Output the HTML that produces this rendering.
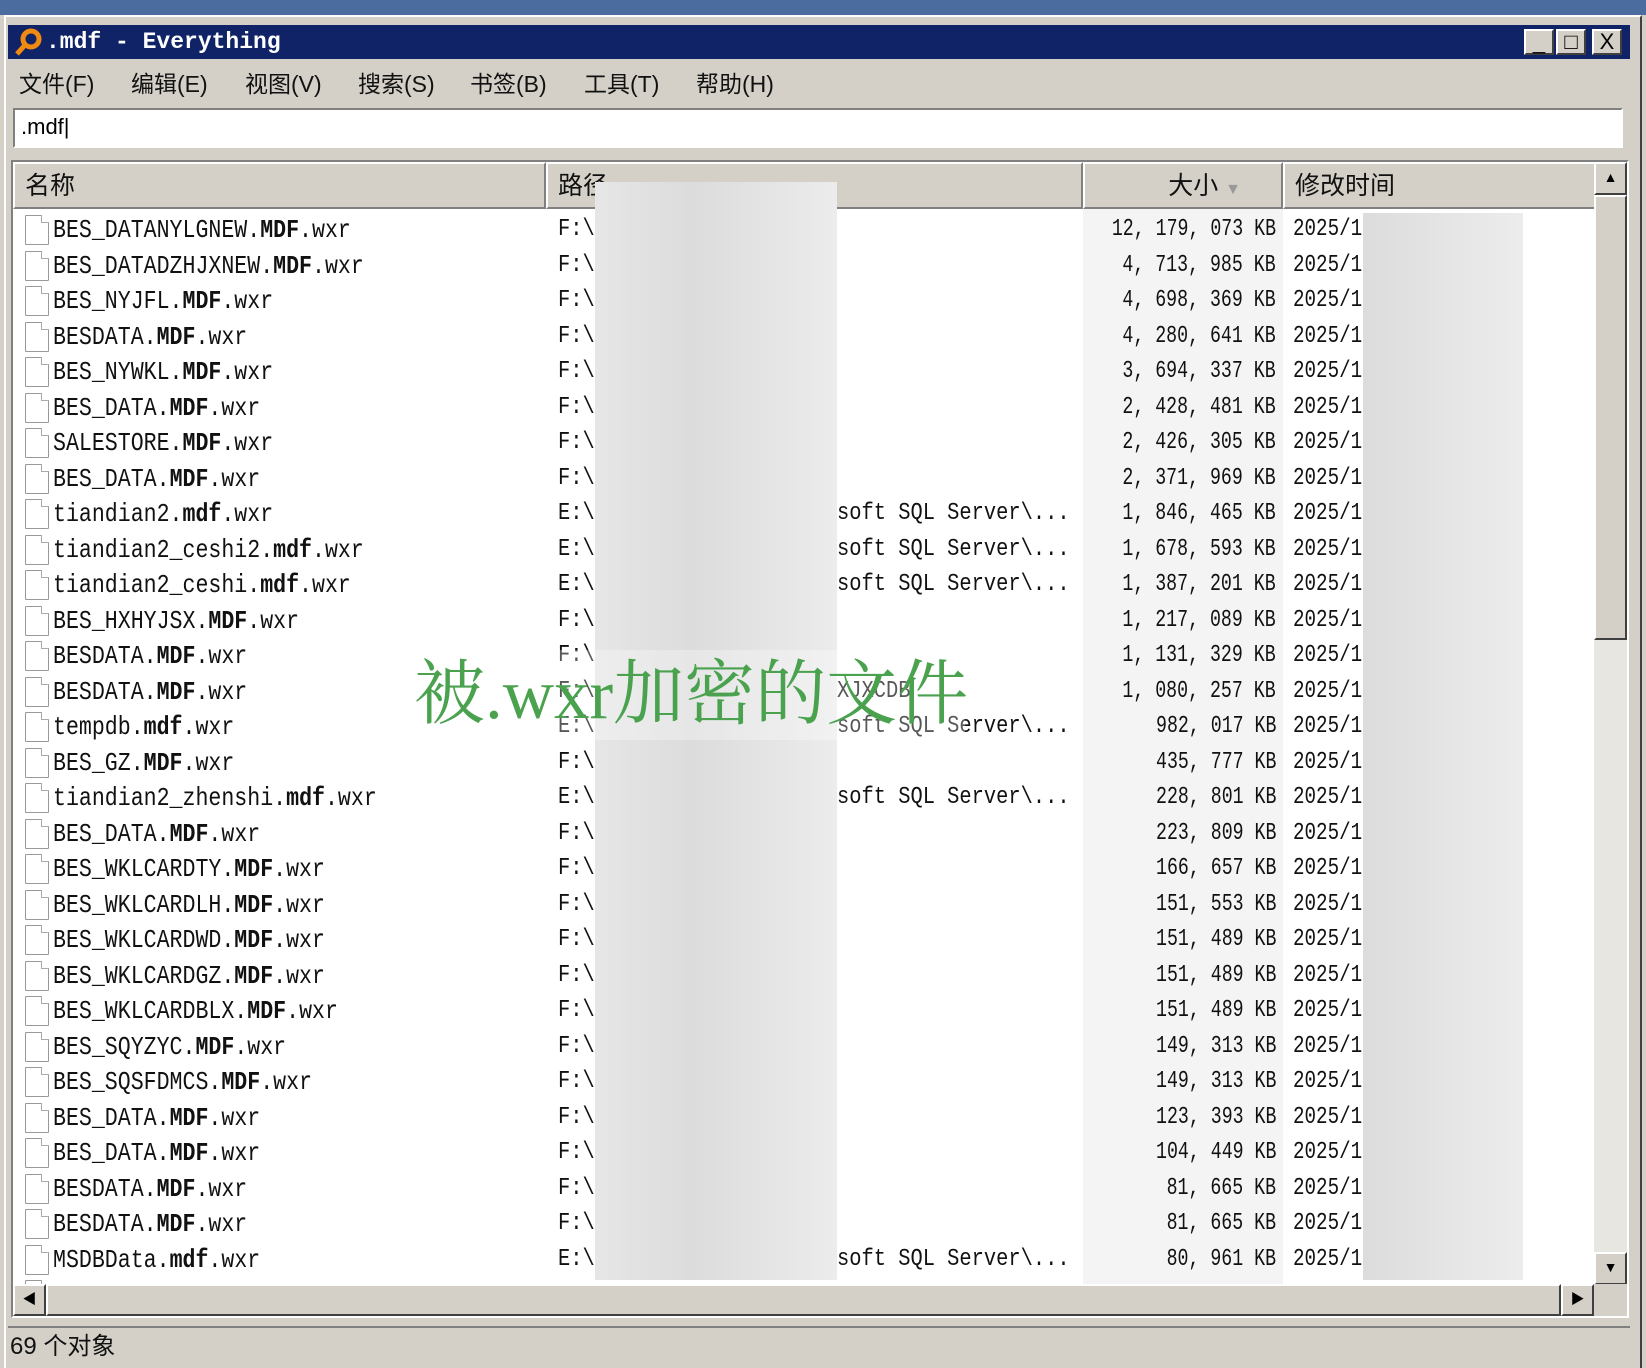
<!DOCTYPE html>
<html><head><meta charset="utf-8"><style>
*{margin:0;padding:0;box-sizing:border-box}
body{width:1646px;height:1368px;background:#d4d0c8;position:relative;overflow:hidden;font-family:"Liberation Sans","Noto Sans CJK SC",sans-serif}
.a{position:absolute}
#top{left:0;top:0;width:1646px;height:15px;background:#4a6c9e}
#win{left:4px;top:15px;width:1638px;height:1353px;background:#d4d0c8;border-left:2px solid #fff;border-top:2px solid #fff;border-right:2px solid #404040}
#title{left:8px;top:25px;width:1622px;height:34px;background:#0f2366;color:#fff;font-family:"Liberation Mono",monospace;font-weight:bold;font-size:23px;line-height:34px;padding-left:38px}
.tb{position:absolute;top:4px;width:30px;height:26px;background:#d4d0c8;border:2px solid;border-color:#fff #404040 #404040 #fff;color:#000;font-size:22px;line-height:22px;text-align:center;font-family:"Liberation Sans",sans-serif;font-weight:normal}
#menu{left:0;top:63px;height:38px;font-size:23px;font-family:"Liberation Sans","Noto Sans CJK SC",sans-serif;color:#111}
#menu span{position:absolute;top:2px;white-space:nowrap}
#search{left:13px;top:108px;width:1610px;height:40px;background:#fff;border:2px solid;border-color:#808080 #fff #fff #808080;font-size:22px;line-height:34px;padding-left:6px}
#list{left:11px;top:160px;width:1618px;height:1158px;border:2px solid;border-color:#808080 #fff #fff #808080;background:#fff;overflow:hidden}
.hd{position:absolute;top:0;height:47px;background:#d4d0c8;border:2px solid;border-color:#fff #808080 #808080 #fff;font-size:25px;line-height:44px;padding-left:10px;color:#111}
.row{position:absolute;left:0;height:35.5px;width:1580px}
.nm{position:absolute;left:40px;top:3px;font-family:"Liberation Mono",monospace;font-size:26px;transform:scaleX(.83);transform-origin:left;white-space:nowrap;color:#111}
.nm b{font-weight:bold}
.ic{position:absolute;left:12px;top:3px;width:24px;height:30px;background:#fff;border:1px solid #999;border-radius:1px}
.ic:after{content:"";position:absolute;right:-1px;top:-1px;width:7px;height:7px;background:#fff;border-left:1px solid #aaa;border-bottom:1px solid #aaa}
.pt{position:absolute;left:545px;top:4px;font-family:"Liberation Mono",monospace;font-size:24px;transform:scaleX(.85);transform-origin:left;color:#111}
.sf{position:absolute;left:824px;top:4px;font-family:"Liberation Mono",monospace;font-size:24px;transform:scaleX(.85);transform-origin:left;white-space:nowrap;color:#111}
.sz{position:absolute;right:317px;top:4px;font-family:"Liberation Mono",monospace;font-size:24px;transform:scaleX(.76);transform-origin:right;white-space:nowrap;color:#111}
.dt{position:absolute;left:1280px;top:4px;font-family:"Liberation Mono",monospace;font-size:24px;transform:scaleX(.8);transform-origin:left;color:#111}
</style></head><body>
<div class="a" id="top"></div>
<div class="a" id="win"></div>
<div class="a" id="title">.mdf - Everything
<svg style="position:absolute;left:6px;top:2px" width="30" height="30" viewBox="0 0 30 30"><circle cx="17" cy="12" r="8" fill="none" stroke="#f08a10" stroke-width="5"/><line x1="11" y1="18" x2="3" y2="27" stroke="#f08a10" stroke-width="5"/></svg>
<div class="tb" style="left:1516px">_</div><div class="tb" style="left:1548px">□</div><div class="tb" style="left:1584px">X</div>
</div>
<div class="a" id="menu"><span style="left:19px">文件(F)</span><span style="left:131px">编辑(E)</span><span style="left:245px">视图(V)</span><span style="left:358px">搜索(S)</span><span style="left:470px">书签(B)</span><span style="left:584px">工具(T)</span><span style="left:696px">帮助(H)</span></div>
<div class="a" id="search">.mdf|</div>
<div class="a" id="list">
<div style="position:absolute;left:1070px;top:47px;width:200px;height:1120px;background:#f4f4f4"></div>
<div class="hd" style="left:0;width:533px">名称</div>
<div class="hd" style="left:533px;width:537px">路径</div>
<div class="hd" style="left:1070px;width:200px;text-align:right;padding-right:40px">大小 <span style="color:#999;font-size:16px">▼</span></div>
<div class="hd" style="left:1270px;width:313px">修改时间</div>
<div id="rows" style="position:absolute;left:0;top:50px">
<div class="row" style="top:0px"><div class="ic"></div><div class="nm">BES_DATANYLGNEW.<b>MDF</b>.wxr</div><div class="pt">F:\</div><div class="sz">12, 179, 073 KB</div><div class="dt">2025/1</div></div>
<div class="row" style="top:35.5px"><div class="ic"></div><div class="nm">BES_DATADZHJXNEW.<b>MDF</b>.wxr</div><div class="pt">F:\</div><div class="sz">4, 713, 985 KB</div><div class="dt">2025/1</div></div>
<div class="row" style="top:71px"><div class="ic"></div><div class="nm">BES_NYJFL.<b>MDF</b>.wxr</div><div class="pt">F:\</div><div class="sz">4, 698, 369 KB</div><div class="dt">2025/1</div></div>
<div class="row" style="top:106.5px"><div class="ic"></div><div class="nm">BESDATA.<b>MDF</b>.wxr</div><div class="pt">F:\</div><div class="sz">4, 280, 641 KB</div><div class="dt">2025/1</div></div>
<div class="row" style="top:142px"><div class="ic"></div><div class="nm">BES_NYWKL.<b>MDF</b>.wxr</div><div class="pt">F:\</div><div class="sz">3, 694, 337 KB</div><div class="dt">2025/1</div></div>
<div class="row" style="top:177.5px"><div class="ic"></div><div class="nm">BES_DATA.<b>MDF</b>.wxr</div><div class="pt">F:\</div><div class="sz">2, 428, 481 KB</div><div class="dt">2025/1</div></div>
<div class="row" style="top:213px"><div class="ic"></div><div class="nm">SALESTORE.<b>MDF</b>.wxr</div><div class="pt">F:\</div><div class="sz">2, 426, 305 KB</div><div class="dt">2025/1</div></div>
<div class="row" style="top:248.5px"><div class="ic"></div><div class="nm">BES_DATA.<b>MDF</b>.wxr</div><div class="pt">F:\</div><div class="sz">2, 371, 969 KB</div><div class="dt">2025/1</div></div>
<div class="row" style="top:284px"><div class="ic"></div><div class="nm">tiandian2.<b>mdf</b>.wxr</div><div class="pt">E:\</div><div class="sf">soft SQL Server\...</div><div class="sz">1, 846, 465 KB</div><div class="dt">2025/1</div></div>
<div class="row" style="top:319.5px"><div class="ic"></div><div class="nm">tiandian2_ceshi2.<b>mdf</b>.wxr</div><div class="pt">E:\</div><div class="sf">soft SQL Server\...</div><div class="sz">1, 678, 593 KB</div><div class="dt">2025/1</div></div>
<div class="row" style="top:355px"><div class="ic"></div><div class="nm">tiandian2_ceshi.<b>mdf</b>.wxr</div><div class="pt">E:\</div><div class="sf">soft SQL Server\...</div><div class="sz">1, 387, 201 KB</div><div class="dt">2025/1</div></div>
<div class="row" style="top:390.5px"><div class="ic"></div><div class="nm">BES_HXHYJSX.<b>MDF</b>.wxr</div><div class="pt">F:\</div><div class="sz">1, 217, 089 KB</div><div class="dt">2025/1</div></div>
<div class="row" style="top:426px"><div class="ic"></div><div class="nm">BESDATA.<b>MDF</b>.wxr</div><div class="pt">F:\</div><div class="sz">1, 131, 329 KB</div><div class="dt">2025/1</div></div>
<div class="row" style="top:461.5px"><div class="ic"></div><div class="nm">BESDATA.<b>MDF</b>.wxr</div><div class="pt">F:\</div><div class="sf">XJXCDB</div><div class="sz">1, 080, 257 KB</div><div class="dt">2025/1</div></div>
<div class="row" style="top:497px"><div class="ic"></div><div class="nm">tempdb.<b>mdf</b>.wxr</div><div class="pt">E:\</div><div class="sf">soft SQL Server\...</div><div class="sz">982, 017 KB</div><div class="dt">2025/1</div></div>
<div class="row" style="top:532.5px"><div class="ic"></div><div class="nm">BES_GZ.<b>MDF</b>.wxr</div><div class="pt">F:\</div><div class="sz">435, 777 KB</div><div class="dt">2025/1</div></div>
<div class="row" style="top:568px"><div class="ic"></div><div class="nm">tiandian2_zhenshi.<b>mdf</b>.wxr</div><div class="pt">E:\</div><div class="sf">soft SQL Server\...</div><div class="sz">228, 801 KB</div><div class="dt">2025/1</div></div>
<div class="row" style="top:603.5px"><div class="ic"></div><div class="nm">BES_DATA.<b>MDF</b>.wxr</div><div class="pt">F:\</div><div class="sz">223, 809 KB</div><div class="dt">2025/1</div></div>
<div class="row" style="top:639px"><div class="ic"></div><div class="nm">BES_WKLCARDTY.<b>MDF</b>.wxr</div><div class="pt">F:\</div><div class="sz">166, 657 KB</div><div class="dt">2025/1</div></div>
<div class="row" style="top:674.5px"><div class="ic"></div><div class="nm">BES_WKLCARDLH.<b>MDF</b>.wxr</div><div class="pt">F:\</div><div class="sz">151, 553 KB</div><div class="dt">2025/1</div></div>
<div class="row" style="top:710px"><div class="ic"></div><div class="nm">BES_WKLCARDWD.<b>MDF</b>.wxr</div><div class="pt">F:\</div><div class="sz">151, 489 KB</div><div class="dt">2025/1</div></div>
<div class="row" style="top:745.5px"><div class="ic"></div><div class="nm">BES_WKLCARDGZ.<b>MDF</b>.wxr</div><div class="pt">F:\</div><div class="sz">151, 489 KB</div><div class="dt">2025/1</div></div>
<div class="row" style="top:781px"><div class="ic"></div><div class="nm">BES_WKLCARDBLX.<b>MDF</b>.wxr</div><div class="pt">F:\</div><div class="sz">151, 489 KB</div><div class="dt">2025/1</div></div>
<div class="row" style="top:816.5px"><div class="ic"></div><div class="nm">BES_SQYZYC.<b>MDF</b>.wxr</div><div class="pt">F:\</div><div class="sz">149, 313 KB</div><div class="dt">2025/1</div></div>
<div class="row" style="top:852px"><div class="ic"></div><div class="nm">BES_SQSFDMCS.<b>MDF</b>.wxr</div><div class="pt">F:\</div><div class="sz">149, 313 KB</div><div class="dt">2025/1</div></div>
<div class="row" style="top:887.5px"><div class="ic"></div><div class="nm">BES_DATA.<b>MDF</b>.wxr</div><div class="pt">F:\</div><div class="sz">123, 393 KB</div><div class="dt">2025/1</div></div>
<div class="row" style="top:923px"><div class="ic"></div><div class="nm">BES_DATA.<b>MDF</b>.wxr</div><div class="pt">F:\</div><div class="sz">104, 449 KB</div><div class="dt">2025/1</div></div>
<div class="row" style="top:958.5px"><div class="ic"></div><div class="nm">BESDATA.<b>MDF</b>.wxr</div><div class="pt">F:\</div><div class="sz">81, 665 KB</div><div class="dt">2025/1</div></div>
<div class="row" style="top:994px"><div class="ic"></div><div class="nm">BESDATA.<b>MDF</b>.wxr</div><div class="pt">F:\</div><div class="sz">81, 665 KB</div><div class="dt">2025/1</div></div>
<div class="row" style="top:1029.5px"><div class="ic"></div><div class="nm">MSDBData.<b>mdf</b>.wxr</div><div class="pt">E:\</div><div class="sf">soft SQL Server\...</div><div class="sz">80, 961 KB</div><div class="dt">2025/1</div></div>
<div class="row" style="top:1065px"><div class="ic"></div></div>
</div>
<div style="position:absolute;left:582px;top:20px;width:242px;height:1098px;background:linear-gradient(90deg,#e6e6e6,#dcdcdc 40%,#ececec)"></div>
<div style="position:absolute;left:1350px;top:51px;width:160px;height:1067px;background:linear-gradient(90deg,#dcdcdc,#e6e6e6 60%,#ececec)"></div>
<div style="position:absolute;left:1581px;top:0;width:33px;height:1122px;background:#e8e6e0"></div>
<div style="position:absolute;left:1581px;top:0;width:33px;height:33px;background:#d4d0c8;border:2px solid;border-color:#fff #404040 #404040 #fff;font-size:14px;text-align:center;line-height:26px">▲</div>
<div style="position:absolute;left:1581px;top:33px;width:33px;height:445px;background:#d4d0c8;border:2px solid;border-color:#fff #404040 #404040 #fff"></div>
<div style="position:absolute;left:1581px;top:1090px;width:33px;height:33px;background:#d4d0c8;border:2px solid;border-color:#fff #404040 #404040 #fff;font-size:14px;text-align:center;line-height:26px">▼</div>
<div style="position:absolute;left:0;top:1122px;width:1614px;height:34px;background:#d4d0c8"></div>
<div style="position:absolute;left:0;top:1122px;width:33px;height:32px;background:#d4d0c8;border:2px solid;border-color:#fff #404040 #404040 #fff;font-size:14px;text-align:center;line-height:26px">◀</div>
<div style="position:absolute;left:33px;top:1122px;width:1515px;height:32px;background:#d4d0c8;border:2px solid;border-color:#fff #404040 #404040 #fff"></div>
<div style="position:absolute;left:1548px;top:1122px;width:33px;height:32px;background:#d4d0c8;border:2px solid;border-color:#fff #404040 #404040 #fff;font-size:14px;text-align:center;line-height:26px">▶</div>
</div>
<div class="a" style="left:395px;top:650px;width:570px;height:90px;background:rgba(255,255,255,.3)"></div>
<div class="a" style="left:414px;top:645px;font-family:'Liberation Serif','Noto Serif CJK SC',serif;font-size:71px;color:#4aa24f;white-space:nowrap;line-height:100px">被.wxr加密的文件</div>
<div class="a" style="left:8px;top:1326px;width:1622px;height:42px;border-top:2px solid #808080;font-size:24px;line-height:38px;padding-left:2px;color:#111">69 个对象</div>
</body></html>
